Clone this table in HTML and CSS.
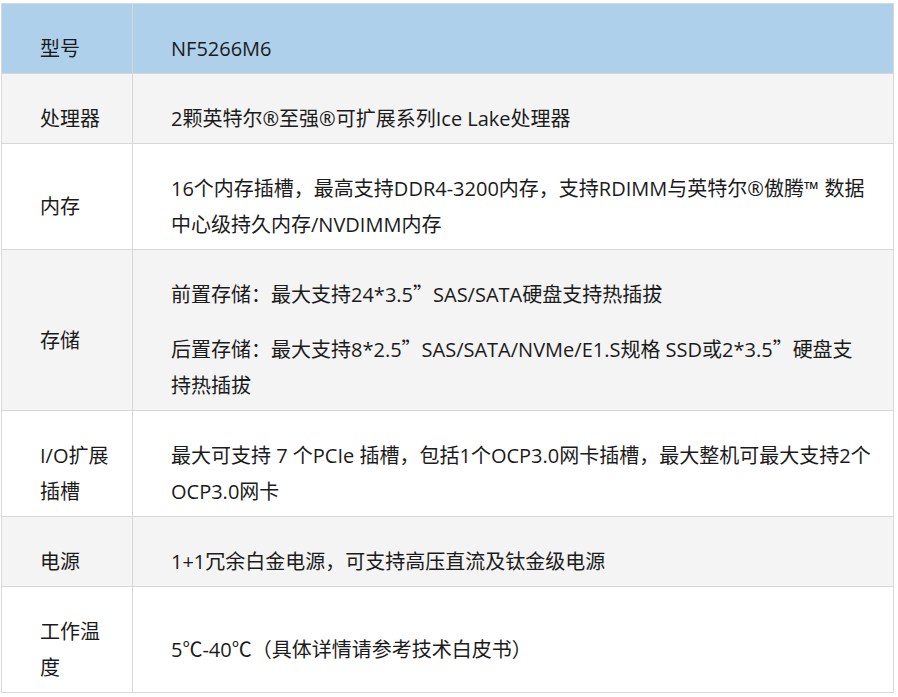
FILE: index.html
```html
<!DOCTYPE html>
<html lang="zh-CN">
<head>
<meta charset="utf-8">
<title>NF5266M6</title>
<link rel="stylesheet" href="styles.css">
</head>
<body>
<table class="spec">
  <colgroup><col class="c1"><col class="c2"></colgroup>
  <tr class="head">
    <td><p>型号</p></td>
    <td><p>NF5266M6</p></td>
  </tr>
  <tr class="gray">
    <td><p>处理器</p></td>
    <td><p>2颗英特尔®至强®可扩展系列Ice Lake处理器</p></td>
  </tr>
  <tr>
    <td><p>内存</p></td>
    <td><p>16个内存插槽，最高支持DDR4-3200内存，支持RDIMM与英特尔®傲腾™ 数据<br>中心级持久内存/NVDIMM内存</p></td>
  </tr>
  <tr class="gray">
    <td><p>存储</p></td>
    <td><p>前置存储：最大支持24*3.5<span class="q">”</span>SAS/SATA硬盘支持热插拔</p><p>后置存储：最大支持8*2.5<span class="q">”</span>SAS/SATA/NVMe/E1.S规格 SSD或2*3.5<span class="q">”</span>硬盘支<br>持热插拔</p></td>
  </tr>
  <tr>
    <td><p>I/O扩展<br>插槽</p></td>
    <td><p>最大可支持 7 个PCIe 插槽，包括1个OCP3.0网卡插槽，最大整机可最大支持2个<br>OCP3.0网卡</p></td>
  </tr>
  <tr class="gray">
    <td><p>电源</p></td>
    <td><p>1+1冗余白金电源，可支持高压直流及钛金级电源</p></td>
  </tr>
  <tr>
    <td><p>工作温<br>度</p></td>
    <td><p>5℃-40℃（具体详情请参考技术白皮书）</p></td>
  </tr>
</table>
</body>
</html>
```
FILE: styles.css
```css
html, body {
  background: #ffffff;
}
body {
  margin: 3px 0 0 1px;
  font-family: "Open Sans", "Noto Sans CJK SC", sans-serif;
  font-size: 20px;
  color: #1b1b1b;
}
.spec {
  border-collapse: collapse;
  table-layout: fixed;
  width: 893px;
}
.c1 { width: 131px; }
.spec td {
  border: 1px solid #d8d8d8;
  vertical-align: middle;
  padding: 7px 2px 6px 38px;
  line-height: 36px;
  white-space: nowrap;
}
.spec p {
  margin: 20px 0 0;
}
.spec p + p {
  margin-top: 19px;
}
.q {
  font-family: "Noto Sans CJK JP", sans-serif;
  line-height: 0;
}
.head td {
  background: #afd0eb;
}
.gray td {
  background: #f4f4f4;
}
```
